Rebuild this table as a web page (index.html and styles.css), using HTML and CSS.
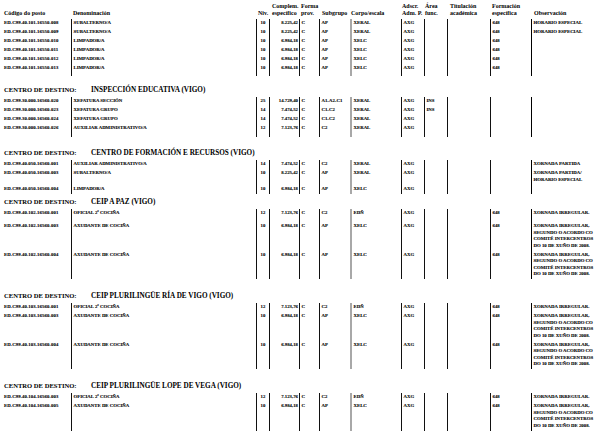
FILE: index.html
```html
<!DOCTYPE html>
<html lang="gl">
<head>
<meta charset="utf-8">
<title>Postos</title>
<link rel="stylesheet" href="styles.css">
</head>
<body>
<div class="page">
  <div class="cols head">
    <div class="code">Código do posto</div>
    <div class="den">Denominación</div>
    <div class="niv">Niv.</div>
    <div class="comp">Complem.<br>específico</div>
    <div class="forma">Forma<br>prov.</div>
    <div class="sub">Subgrupo</div>
    <div class="corpo">Corpo/escala</div>
    <div class="adscr">Adscr.<br>Adm. P.</div>
    <div class="area">Área<br>func.</div>
    <div class="tit">Titulación<br>académica</div>
    <div class="form">Formación<br>específica</div>
    <div class="obs">Observación</div>
  </div>

  <section class="sec">
    <div class="cols row"><div class="code">ED.C99.40.101.16550.008</div><div class="den">SUBALTERNO/A</div><div class="niv">10</div><div class="comp">8.225,42</div><div class="forma">C</div><div class="sub">AP</div><div class="corpo">XERAL</div><div class="adscr">AXG</div><div class="area"></div><div class="tit"></div><div class="form">648</div><div class="obs">HORARIO ESPECIAL</div></div>
    <div class="cols row"><div class="code">ED.C99.40.101.16550.009</div><div class="den">SUBALTERNO/A</div><div class="niv">10</div><div class="comp">8.225,42</div><div class="forma">C</div><div class="sub">AP</div><div class="corpo">XERAL</div><div class="adscr">AXG</div><div class="area"></div><div class="tit"></div><div class="form">648</div><div class="obs">HORARIO ESPECIAL</div></div>
    <div class="cols row"><div class="code">ED.C99.40.101.16550.010</div><div class="den">LIMPADOR/A</div><div class="niv">10</div><div class="comp">6.984,18</div><div class="forma">C</div><div class="sub">AP</div><div class="corpo">XELC</div><div class="adscr">AXG</div><div class="area"></div><div class="tit"></div><div class="form">648</div><div class="obs"></div></div>
    <div class="cols row"><div class="code">ED.C99.40.101.16550.011</div><div class="den">LIMPADOR/A</div><div class="niv">10</div><div class="comp">6.984,18</div><div class="forma">C</div><div class="sub">AP</div><div class="corpo">XELC</div><div class="adscr">AXG</div><div class="area"></div><div class="tit"></div><div class="form">648</div><div class="obs"></div></div>
    <div class="cols row"><div class="code">ED.C99.40.101.16550.012</div><div class="den">LIMPADOR/A</div><div class="niv">10</div><div class="comp">6.984,18</div><div class="forma">C</div><div class="sub">AP</div><div class="corpo">XELC</div><div class="adscr">AXG</div><div class="area"></div><div class="tit"></div><div class="form">648</div><div class="obs"></div></div>
    <div class="cols row end-3"><div class="code">ED.C99.40.101.16550.013</div><div class="den">LIMPADOR/A</div><div class="niv">10</div><div class="comp">6.984,18</div><div class="forma">C</div><div class="sub">AP</div><div class="corpo">XELC</div><div class="adscr">AXG</div><div class="area"></div><div class="tit"></div><div class="form">648</div><div class="obs"></div></div>
  </section>

  <h2 class="dest d2"><span class="lbl">CENTRO DE DESTINO:</span><span class="name">INSPECCIÓN EDUCATIVA (VIGO)</span></h2>
  <section class="sec">
    <div class="cols row"><div class="code">ED.C99.30.000.16560.020</div><div class="den">XEFATURA SECCIÓN</div><div class="niv">25</div><div class="comp">14.729,40</div><div class="forma">C</div><div class="sub">A1-A2-C1</div><div class="corpo">XERAL</div><div class="adscr">AXG</div><div class="area">INS</div><div class="tit"></div><div class="form"></div><div class="obs"></div></div>
    <div class="cols row"><div class="code">ED.C99.30.000.16560.023</div><div class="den">XEFATURA GRUPO</div><div class="niv">14</div><div class="comp">7.474,52</div><div class="forma">C</div><div class="sub">C1-C2</div><div class="corpo">XERAL</div><div class="adscr">AXG</div><div class="area">INS</div><div class="tit"></div><div class="form"></div><div class="obs"></div></div>
    <div class="cols row"><div class="code">ED.C99.30.000.16560.024</div><div class="den">XEFATURA GRUPO</div><div class="niv">14</div><div class="comp">7.474,52</div><div class="forma">C</div><div class="sub">C1-C2</div><div class="corpo">XERAL</div><div class="adscr">AXG</div><div class="area"></div><div class="tit"></div><div class="form"></div><div class="obs"></div></div>
    <div class="cols row end-4"><div class="code">ED.C99.30.000.16560.026</div><div class="den">AUXILIAR ADMINISTRATIVO/A</div><div class="niv">12</div><div class="comp">7.123,76</div><div class="forma">C</div><div class="sub">C2</div><div class="corpo">XERAL</div><div class="adscr">AXG</div><div class="area"></div><div class="tit"></div><div class="form"></div><div class="obs"></div></div>
  </section>

  <h2 class="dest d3"><span class="lbl">CENTRO DE DESTINO:</span><span class="name">CENTRO DE FORMACIÓN E RECURSOS (VIGO)</span></h2>
  <section class="sec">
    <div class="cols row"><div class="code">ED.C99.40.050.16560.001</div><div class="den">AUXILIAR ADMINISTRATIVO/A</div><div class="niv">14</div><div class="comp">7.474,52</div><div class="forma">C</div><div class="sub">C2</div><div class="corpo">XERAL</div><div class="adscr">AXG</div><div class="area"></div><div class="tit"></div><div class="form"></div><div class="obs">XORNADA PARTIDA</div></div>
    <div class="cols row"><div class="code">ED.C99.40.050.16560.003</div><div class="den">SUBALTERNO/A</div><div class="niv">10</div><div class="comp">8.225,42</div><div class="forma">C</div><div class="sub">AP</div><div class="corpo">XERAL</div><div class="adscr">AXG</div><div class="area"></div><div class="tit"></div><div class="form"></div><div class="obs">XORNADA PARTIDA/<br>HORARIO ESPECIAL</div></div>
    <div class="cols row"><div class="code">ED.C99.40.050.16560.004</div><div class="den">LIMPADOR/A</div><div class="niv">10</div><div class="comp">6.984,18</div><div class="forma">C</div><div class="sub">AP</div><div class="corpo">XELC</div><div class="adscr">AXG</div><div class="area"></div><div class="tit"></div><div class="form"></div><div class="obs"></div></div>
  </section>

  <h2 class="dest d4"><span class="lbl">CENTRO DE DESTINO:</span><span class="name">CEIP A PAZ (VIGO)</span></h2>
  <section class="sec">
    <div class="cols row tall"><div class="code">ED.C99.40.102.16560.001</div><div class="den">OFICIAL 2ª COCIÑA</div><div class="niv">12</div><div class="comp">7.123,76</div><div class="forma">C</div><div class="sub">C2</div><div class="corpo">EDÑ</div><div class="adscr">AXG</div><div class="area"></div><div class="tit"></div><div class="form">648</div><div class="obs">XORNADA IRREGULAR.</div></div>
    <div class="cols row"><div class="code">ED.C99.40.102.16560.003</div><div class="den">AXUDANTE DE COCIÑA</div><div class="niv">10</div><div class="comp">6.984,18</div><div class="forma">C</div><div class="sub">AP</div><div class="corpo">XELC</div><div class="adscr">AXG</div><div class="area"></div><div class="tit"></div><div class="form">648</div><div class="obs">XORNADA IRREGULAR,<br>SEGUNDO O ACORDO CO<br>COMITÉ INTERCENTROS<br>DO 10 DE XUÑO DE 2008.</div></div>
    <div class="cols row"><div class="code">ED.C99.40.102.16560.004</div><div class="den">AXUDANTE DE COCIÑA</div><div class="niv">10</div><div class="comp">6.984,18</div><div class="forma">C</div><div class="sub">AP</div><div class="corpo">XELC</div><div class="adscr">AXG</div><div class="area"></div><div class="tit"></div><div class="form">648</div><div class="obs">XORNADA IRREGULAR,<br>SEGUNDO O ACORDO CO<br>COMITÉ INTERCENTROS<br>DO 10 DE XUÑO DE 2008.</div></div>
  </section>

  <h2 class="dest d5"><span class="lbl">CENTRO DE DESTINO:</span><span class="name">CEIP PLURILINGÜE RÍA DE VIGO (VIGO)</span></h2>
  <section class="sec">
    <div class="cols row"><div class="code">ED.C99.40.103.16560.001</div><div class="den">OFICIAL 2ª COCIÑA</div><div class="niv">12</div><div class="comp">7.123,76</div><div class="forma">C</div><div class="sub">C2</div><div class="corpo">EDÑ</div><div class="adscr">AXG</div><div class="area"></div><div class="tit"></div><div class="form">648</div><div class="obs">XORNADA IRREGULAR.</div></div>
    <div class="cols row"><div class="code">ED.C99.40.103.16560.003</div><div class="den">AXUDANTE DE COCIÑA</div><div class="niv">10</div><div class="comp">6.984,18</div><div class="forma">C</div><div class="sub">AP</div><div class="corpo">XELC</div><div class="adscr">AXG</div><div class="area"></div><div class="tit"></div><div class="form">648</div><div class="obs">XORNADA IRREGULAR,<br>SEGUNDO O ACORDO CO<br>COMITÉ INTERCENTROS<br>DO 10 DE XUÑO DE 2008.</div></div>
    <div class="cols row"><div class="code">ED.C99.40.103.16560.004</div><div class="den">AXUDANTE DE COCIÑA</div><div class="niv">10</div><div class="comp">6.984,18</div><div class="forma">C</div><div class="sub">AP</div><div class="corpo">XELC</div><div class="adscr">AXG</div><div class="area"></div><div class="tit"></div><div class="form">648</div><div class="obs">XORNADA IRREGULAR,<br>SEGUNDO O ACORDO CO<br>COMITÉ INTERCENTROS<br>DO 10 DE XUÑO DE 2008.</div></div>
  </section>

  <h2 class="dest d6"><span class="lbl">CENTRO DE DESTINO:</span><span class="name">CEIP PLURILINGÜE LOPE DE VEGA (VIGO)</span></h2>
  <section class="sec">
    <div class="cols row"><div class="code">ED.C99.40.104.16560.003</div><div class="den">OFICIAL 2ª COCIÑA</div><div class="niv">12</div><div class="comp">7.123,76</div><div class="forma">C</div><div class="sub">C2</div><div class="corpo">EDÑ</div><div class="adscr">AXG</div><div class="area"></div><div class="tit"></div><div class="form">648</div><div class="obs">XORNADA IRREGULAR.</div></div>
    <div class="cols row"><div class="code">ED.C99.40.104.16560.005</div><div class="den">AXUDANTE DE COCIÑA</div><div class="niv">10</div><div class="comp">6.984,18</div><div class="forma">C</div><div class="sub">AP</div><div class="corpo">XELC</div><div class="adscr">AXG</div><div class="area"></div><div class="tit"></div><div class="form">648</div><div class="obs">XORNADA IRREGULAR,<br>SEGUNDO O ACORDO CO<br>COMITÉ INTERCENTROS<br>DO 10 DE XUÑO DE 2008.</div></div>
  </section>
</div>
</body>
</html>
```
FILE: styles.css
```css
* { box-sizing: border-box; margin: 0; padding: 0; }
html, body { background: #fff; }
body {
  font-family: "Liberation Serif", "Times New Roman", serif;
  font-weight: bold;
  color: #000;
  overflow: hidden;
}
.page { width: 616px; padding-left: 4px; }

.cols {
  display: grid;
  grid-template-columns: 67px 185px 13px 30px 20px 31px 51px 23px 23px 43px 41px 1fr;
}

/* header */
.head {
  height: 19px;
  padding-top: 2.5px;
  padding-bottom: 2.5px;
  font-size: 6px;
  line-height: 7px;
  align-items: end;
  white-space: nowrap;
}
.head > div { padding-left: 1px; }
.head > .code { padding-left: 0; }
.head > .den { padding-left: 2px; }
.head > .niv { padding-left: 2px; }
.head > .comp { padding-left: 3px; }
.head > .forma { padding-left: 2px; }
.head > .sub { padding-left: 3px; }
.head > .tit { padding-left: 3px; }
.head > .form { padding-left: 2px; }
.head > .obs { padding-left: 3px; }

/* data rows */
.row {
  font-size: 4.8px;
  line-height: 6.5px;
  white-space: nowrap;
  -webkit-text-stroke: 0.1px #000;
}
.row > div {
  padding: 1px 0 1.5px 1.5px;
  border-left: 1px solid #111;
}
.row > .code { border-left: none; padding-left: 0; letter-spacing: 0.1px; }
.row > .niv { text-align: center; padding-left: 0; }
.row > .comp { text-align: right; padding-right: 1px; padding-left: 0; }
.row > .corpo { border-left: 2px solid #a8a8a8; }
.row > .obs { border-left: 1px solid #000; }

.row.tall > div { padding-bottom: 5.5px; }
.row.end-3 > div { padding-bottom: 4.5px; }
.row.end-4 > div { padding-bottom: 5.5px; }

/* destination headings */
.dest {
  display: flex;
  align-items: baseline;
  font-size: 7.2px;
  line-height: 8px;
  font-weight: bold;
  white-space: nowrap;
  margin-bottom: 3px;
}
.dest .lbl { width: 87px; font-size: 6.6px; }
.dest .name { font-size: 7.2px; }
.d2 { margin-top: 10px; }
.d3 { margin-top: 12px; }
.d4 { margin-top: 4.5px; }
.d5 { margin-top: 13px; }
.d6 { margin-top: 13px; }
```
